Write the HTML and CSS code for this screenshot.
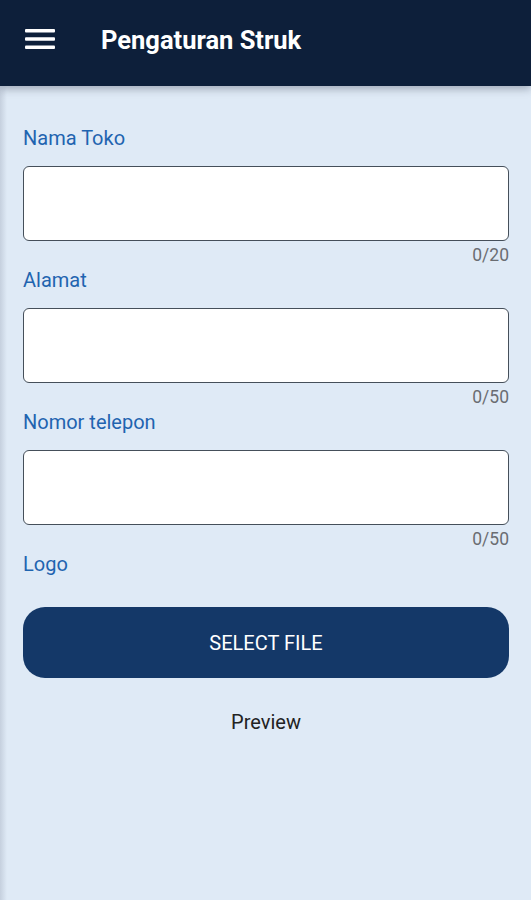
FILE: index.html
```html
<!DOCTYPE html>
<html lang="id">
<head>
    <meta charset="UTF-8">
    <meta name="viewport" content="width=device-width, initial-scale=1.0">
    <title>Pengaturan Struk</title>
    <link rel="stylesheet" href="styles.css">
</head>
<body>
    <header class="app-bar">
        <button class="menu-btn" aria-label="Menu">
            <svg width="30" height="20" viewBox="0 0 30 20">
                <rect x="0" y="0" width="30" height="3.4" rx="1" fill="#fff"/>
                <rect x="0" y="8.3" width="30" height="3.4" rx="1" fill="#fff"/>
                <rect x="0" y="16.6" width="30" height="3.4" rx="1" fill="#fff"/>
            </svg>
        </button>
        <h1 class="app-title">Pengaturan Struk</h1>
    </header>

    <main class="content">
        <div class="field">
            <label class="field-label" for="nama">Nama Toko</label>
            <input class="field-input" type="text" id="nama" maxlength="20">
            <div class="field-counter">0/20</div>
        </div>
        <div class="field">
            <label class="field-label" for="alamat">Alamat</label>
            <input class="field-input" type="text" id="alamat" maxlength="50">
            <div class="field-counter">0/50</div>
        </div>
        <div class="field">
            <label class="field-label" for="telepon">Nomor telepon</label>
            <input class="field-input" type="text" id="telepon" maxlength="50">
            <div class="field-counter">0/50</div>
        </div>

        <div class="field-label">Logo</div>
        <button class="select-btn">SELECT FILE</button>
        <div class="preview">Preview</div>
    </main>
</body>
</html>
```

FILE: styles.css
```css
* {
    margin: 0;
    padding: 0;
    box-sizing: border-box;
    font-family: Roboto, "Noto Sans", sans-serif;
}

body {
    min-height: 100vh;
    background: #dfeaf6;
    overflow: hidden;
    position: relative;
}

/* soft shadow on the left edge */
body::before {
    content: '';
    position: absolute;
    top: 0;
    left: 0;
    width: 7px;
    height: 100%;
    background: linear-gradient(to right, rgba(120, 130, 150, 0.25), rgba(120, 130, 150, 0));
    pointer-events: none;
}

.app-bar {
    height: 86px;
    background: #0d1f3a;
    display: flex;
    align-items: center;
    padding-left: 25px;
    box-shadow: 0 3px 8px rgba(40, 50, 70, 0.35);
    position: relative;
    z-index: 2;
}

.menu-btn {
    background: none;
    border: none;
    display: flex;
    align-items: center;
    width: 30px;
    height: 20px;
    margin-top: -8px;
}

.app-title {
    color: #fff;
    font-size: 25.5px;
    font-weight: 700;
    margin-left: 46px;
    margin-top: -6px;
}

.content {
    padding: 40px 22px 0 23px;
    display: flex;
    flex-direction: column;
}

.field {
    display: flex;
    flex-direction: column;
    margin-bottom: 3px;
}

.field-label {
    color: #1f64b0;
    font-size: 20px;
    line-height: 24px;
}

.field-input {
    margin-top: 16px;
    height: 75px;
    width: 100%;
    background: #fff;
    border: 1.5px solid #454f5a;
    border-radius: 6px;
    font-size: 18px;
    padding: 0 14px;
    outline: none;
}

.field-counter {
    text-align: right;
    color: #6a6d72;
    font-size: 17.5px;
    line-height: 20px;
    margin-top: 4px;
}

.select-btn {
    margin-top: 31px;
    height: 71px;
    width: 100%;
    background: #143868;
    color: #fff;
    border: none;
    border-radius: 22px;
    font-size: 20px;
    cursor: pointer;
}

.preview {
    margin-top: 32px;
    text-align: center;
    color: #222;
    font-size: 20px;
}
```
